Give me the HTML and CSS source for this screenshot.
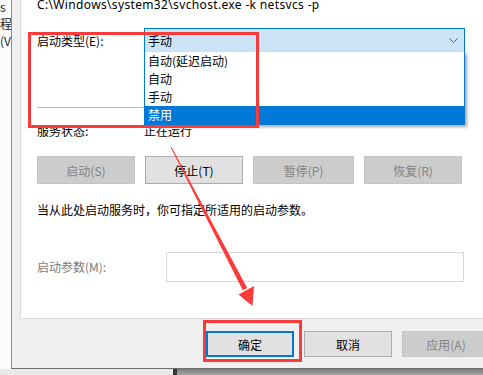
FILE: index.html
```html
<!DOCTYPE html>
<html lang="zh-CN">
<head>
    <meta charset="UTF-8">
    <meta name="viewport" content="width=device-width, initial-scale=1.0">
    <title>服务属性</title>
    <link rel="stylesheet" href="styles.css">
</head>
<body>
    <div class="screen">
        <div class="main-row">
            <!-- window behind the dialog -->
            <div class="behind">
                <div>s</div>
                <div>程</div>
                <div>(V</div>
            </div>

            <div class="dialog">
                <div class="panel">
                    <div class="path">C:\Windows\system32\svchost.exe -k netsvcs -p</div>

                    <div class="field-row start-type">
                        <span class="label">启动类型(E):</span>
                        <div class="combo">
                            <span class="combo-value">手动</span>
                            <svg class="chevron" width="9" height="5" viewBox="0 0 9 5">
                                <polyline points="0.5,0.5 4.5,4.5 8.5,0.5" fill="none" stroke="#5a5a5a" stroke-width="1"/>
                            </svg>
                            <ul class="dropdown">
                                <li>自动(延迟启动)</li>
                                <li>自动</li>
                                <li>手动</li>
                                <li class="selected">禁用</li>
                            </ul>
                        </div>
                    </div>

                    <div class="separator"></div>

                    <div class="field-row status">
                        <span class="label">服务状态:</span>
                        <span>正在运行</span>
                    </div>

                    <div class="service-buttons">
                        <button class="btn" disabled>启动(S)</button>
                        <button class="btn">停止(T)</button>
                        <button class="btn" disabled>暂停(P)</button>
                        <button class="btn" disabled>恢复(R)</button>
                    </div>

                    <p class="hint">当从此处启动服务时，你可指定所适用的启动参数。</p>

                    <div class="field-row params">
                        <span class="label disabled">启动参数(M):</span>
                        <div class="text-input"></div>
                    </div>

                    <div class="mark mark-type"></div>
                </div>

                <div class="footer">
                    <button class="btn default">确定</button>
                    <button class="btn">取消</button>
                    <button class="btn" disabled>应用(A)</button>
                </div>
            </div>
        </div>

        <div class="bottom-strip">
            <div class="strip-light"></div>
            <div class="strip-dark"></div>
        </div>

        <!-- annotations -->
        <div class="mark mark-ok"></div>
        <svg class="arrow" width="483" height="375" viewBox="0 0 483 375">
            <polygon points="171.4,146.8 170.6,147.2 242.8,290.2 247.2,287.9" fill="#fb3a3a"/>
            <polygon points="252.5,306 238.5,294.5 254,286" fill="#fb3a3a"/>
        </svg>
    </div>
</body>
</html>
```

FILE: styles.css
```css
body {
    margin: 0;
    padding: 0;
    font-family: "Noto Sans CJK SC", "Noto Sans", sans-serif;
    font-size: 12px;
    line-height: 16px;
    color: #000;
}
.screen {
    position: relative;
    width: 483px;
    height: 375px;
    overflow: hidden;
    display: flex;
    flex-direction: column;
}
.main-row {
    display: flex;
    height: 369px;
}
.behind {
    width: 11px;
    flex-shrink: 0;
    overflow: hidden;
    background-color: #fbfbfb;
    color: #222;
    line-height: 17px;
    white-space: nowrap;
}
.behind div:first-child {
    margin-top: -2px;
}
.dialog {
    flex: 1;
    display: flex;
    flex-direction: column;
    background-color: #f0f0f0;
    border-left: 1px solid #8e8e8e;
    border-bottom: 1px solid #6f6f6f;
    padding-left: 8px;
    min-width: 0;
}
.panel {
    position: relative;
    display: flex;
    flex-direction: column;
    align-items: flex-start;
    background-color: #fff;
    border-left: 1px solid #d9d9d9;
    border-bottom: 1px solid #d9d9d9;
    padding: 0 0 36px 16px;
}
.path {
    margin-top: -3px;
    font-family: "Noto Sans", "Open Sans", sans-serif;
    letter-spacing: 0.35px;
    white-space: nowrap;
}
.field-row {
    display: flex;
    align-items: center;
}
.label {
    width: 107px;
    flex-shrink: 0;
}
.label.disabled {
    color: #7a7a7a;
}
.start-type {
    margin-top: 15px;
}
.combo {
    position: relative;
    box-sizing: border-box;
    width: 321px;
    height: 25px;
    display: flex;
    align-items: center;
    justify-content: space-between;
    padding: 0 6px 0 3px;
    background-color: #cce4f7;
    border: 1px solid #0078d7;
}
.dropdown {
    position: absolute;
    top: 100%;
    left: -1px;
    right: -1px;
    margin: 0;
    padding: 0;
    list-style: none;
    background-color: #fff;
    border: 1px solid #0078d7;
    border-top: none;
    box-shadow: 2px 2px 3px rgba(0, 0, 0, 0.35);
    z-index: 2;
}
.dropdown li {
    height: 18px;
    line-height: 18px;
    padding-left: 3px;
}
.dropdown li.selected {
    background-color: #0078d7;
    color: #fff;
}
.separator {
    width: 427px;
    height: 1px;
    margin-top: 54px;
    background-color: #b9b9b9;
}
.status {
    margin-top: 15px;
}
.service-buttons {
    display: grid;
    grid-template-columns: 98px 98px 101px 98px;
    column-gap: 10px;
    margin-top: 17px;
}
.btn {
    box-sizing: border-box;
    height: 28px;
    padding: 0;
    font-family: inherit;
    font-size: 12px;
    color: #000;
    background-color: #e1e1e1;
    border: 1px solid #adadad;
}
.btn:disabled {
    color: #838383;
    background-color: #cccccc;
    border-color: #c4c4c4;
}
.hint {
    margin: 18px 0 0 0;
}
.params {
    margin-top: 34px;
}
.params .label {
    width: 129px;
}
.text-input {
    box-sizing: border-box;
    width: 298px;
    height: 30px;
    background-color: #fff;
    border: 1px solid #d9d9d9;
}
.footer {
    display: flex;
    gap: 10px;
    padding: 12px 0 11px 186px;
}
.footer .btn {
    width: 88px;
    height: 26px;
    flex-shrink: 0;
}
.footer .btn.default {
    border: 2px solid #0078d7;
}
.bottom-strip {
    display: flex;
    height: 6px;
}
.strip-light {
    width: 173px;
    background-color: #e9e9e9;
    border-right: 4px solid #3a3a3a;
}
.strip-dark {
    flex: 1;
    background: linear-gradient(#7a7a7a, #a6a6a6);
}
.mark {
    position: absolute;
    box-sizing: border-box;
    border: 3px solid #fb3a3a;
    z-index: 3;
}
.mark-type {
    left: 7px;
    top: 32px;
    width: 231px;
    height: 96px;
}
.mark-ok {
    left: 203px;
    top: 320px;
    width: 99px;
    height: 42px;
}
.arrow {
    position: absolute;
    left: 0;
    top: 0;
    z-index: 4;
}
```
